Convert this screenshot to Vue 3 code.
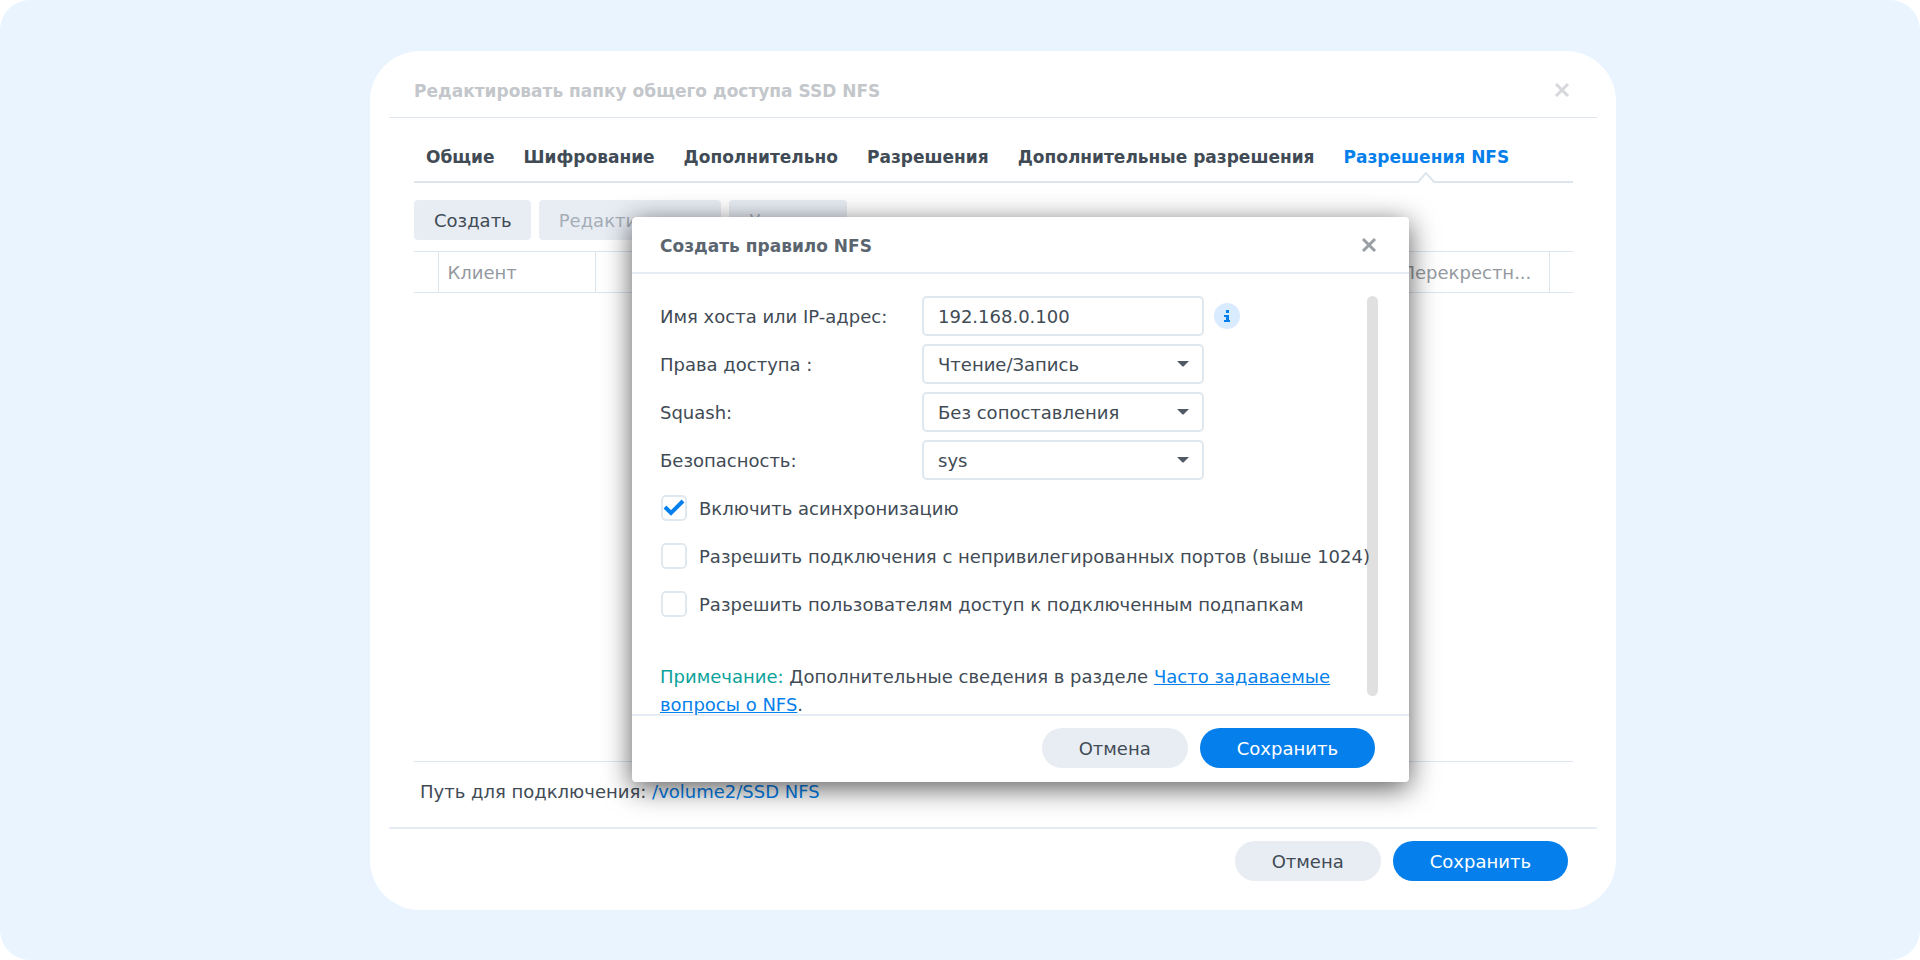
<script setup>
import { ref } from 'vue'

const tabs = [
  'Общие',
  'Шифрование',
  'Дополнительно',
  'Разрешения',
  'Дополнительные разрешения',
  'Разрешения NFS',
]
const activeTab = ref('Разрешения NFS')

const host = ref('192.168.0.100')
const selects = ref([
  { id: 'access', label: 'Права доступа :', value: 'Чтение/Запись' },
  { id: 'squash', label: 'Squash:', value: 'Без сопоставления' },
  { id: 'security', label: 'Безопасность:', value: 'sys' },
])
const options = ref([
  { id: 'async', label: 'Включить асинхронизацию', checked: true },
  { id: 'ports', label: 'Разрешить подключения с непривилегированных портов (выше 1024)', checked: false },
  { id: 'subfolders', label: 'Разрешить пользователям доступ к подключенным подпапкам', checked: false },
])
</script>

<template>
  <div class="page">
    <section class="window">
      <header class="window-head">
        <h1>Редактировать папку общего доступа SSD NFS</h1>
        <button class="close" type="button" aria-label="Закрыть">
          <svg width="16" height="16" viewBox="0 0 16 16"><path d="M2 2L14 14M14 2L2 14" /></svg>
        </button>
      </header>

      <div class="window-body">
        <nav class="tabs">
          <button
            v-for="tab in tabs"
            :key="tab"
            type="button"
            :class="['tab', { active: tab === activeTab }]"
            @click="activeTab = tab"
          >
            {{ tab }}
            <svg v-if="tab === activeTab" class="notch" width="20" height="11" viewBox="0 0 20 11">
              <path class="notch-fill" d="M2 11L10 2L18 11Z" />
              <path class="notch-line" d="M0 10H2L10 1L18 10H20" />
            </svg>
          </button>
        </nav>

        <div class="toolbar">
          <button class="tool" type="button">Создать</button>
          <button class="tool" type="button" disabled>Редактировать</button>
          <button class="tool" type="button" disabled>Удалить</button>
        </div>

        <table class="rules">
          <colgroup>
            <col class="col-edge" />
            <col class="col-client" />
            <col />
            <col class="col-cross" />
            <col class="col-edge" />
          </colgroup>
          <thead>
            <tr>
              <th></th>
              <th>Клиент</th>
              <th></th>
              <th>Перекрестн...</th>
              <th></th>
            </tr>
          </thead>
        </table>

        <p class="path">Путь для подключения: <a href="#">/volume2/SSD NFS</a></p>
      </div>

      <footer class="window-foot">
        <button class="pill" type="button">Отмена</button>
        <button class="pill primary" type="button">Сохранить</button>
      </footer>

      <div class="dialog" role="dialog" aria-labelledby="dialog-title">
        <header class="dialog-head">
          <h2 id="dialog-title">Создать правило NFS</h2>
          <button class="close" type="button" aria-label="Закрыть">
            <svg width="16" height="16" viewBox="0 0 16 16"><path d="M2 2L14 14M14 2L2 14" /></svg>
          </button>
        </header>

        <form class="dialog-body" @submit.prevent>
          <div class="scrollbar"></div>
          <div class="field">
            <label for="host">Имя хоста или IP-адрес:</label>
            <input id="host" v-model="host" class="control" type="text" />
            <svg class="info" width="26" height="26" viewBox="0 0 26 26">
              <circle cx="13" cy="13" r="13" />
              <path d="M12 7h3v3h-3zM10 12h5v5h1v2h-6v-2h2v-3h-2z" />
            </svg>
          </div>
          <div v-for="item in selects" :key="item.id" class="field">
            <label :for="item.id">{{ item.label }}</label>
            <div class="select">
              <select :id="item.id" v-model="item.value" class="control">
                <option>{{ item.value }}</option>
              </select>
              <svg class="arrow" width="14" height="8" viewBox="0 0 14 8">
                <path d="M1 1H13L8 6Q7 7 6 6Z" />
              </svg>
            </div>
          </div>
          <label v-for="item in options" :key="item.id" class="option">
            <span class="box">
              <input v-model="item.checked" type="checkbox" />
              <svg v-if="item.checked" class="tick" width="26" height="26" viewBox="0 0 26 26">
                <path d="M4 12L10 18L22 6" />
              </svg>
            </span>
            <span class="option-text">{{ item.label }}</span>
          </label>
          <p class="note">
            <span>Примечание:</span> Дополнительные сведения в разделе
            <a href="#">Часто задаваемые вопросы о NFS</a>.
          </p>
        </form>

        <footer class="dialog-foot">
          <button class="pill" type="button">Отмена</button>
          <button class="pill primary" type="button">Сохранить</button>
        </footer>
      </div>
    </section>
  </div>
</template>

<style>
body {
  margin: 0;
  background: #fff;
}
</style>

<style scoped>
.page,
.page * {
  box-sizing: border-box;
}

.page {
  display: flex;
  min-height: 100vh;
  padding: 51px 304px 50px 370px;
  border-radius: 30px;
  background: #e9f4ff;
  color: #414b55;
  font-family: "DejaVu Sans", sans-serif;
  font-size: 18px;
  line-height: 28px;
}

button,
input,
select {
  margin: 0;
  color: inherit;
  font: inherit;
}

button {
  padding: 0;
  border: 0;
  background: none;
}

h1,
h2,
p {
  margin: 0;
}

h1,
h2 {
  padding-top: 2px;
  font-size: 17px;
  line-height: 28px;
}

a {
  color: #057feb;
}

.window {
  position: relative;
  display: flex;
  flex: 1;
  flex-direction: column;
  min-width: 0;
  padding: 0 19px;
  border-radius: 50px;
  background: #fff;
}

.window-head {
  display: flex;
  align-items: center;
  justify-content: space-between;
  height: 67px;
  padding: 12px 27px 0 25px;
  border-bottom: 1px solid #dde6ee;
}

.window-head h1 {
  color: #c3c7cb;
}

.close {
  display: flex;
}

.close svg {
  fill: none;
  stroke: #999fa5;
  stroke-width: 3;
}

.window-head .close svg {
  stroke: #d6d8db;
}

.window-body {
  display: flex;
  flex: 1;
  flex-direction: column;
  padding: 0 24px 0 25px;
}

.tabs {
  display: flex;
  gap: 29px;
  height: 65px;
  padding: 15px 12px 0;
  border-bottom: 2px solid #dde6ee;
}

.tab {
  position: relative;
  font-size: 17px;
  font-weight: bold;
  white-space: nowrap;
}

.tab.active {
  color: #057feb;
}

.notch {
  position: absolute;
  bottom: -2px;
  left: 50%;
  margin-left: -10px;
}

.notch-fill {
  fill: #fff;
}

.notch-line {
  fill: none;
  stroke: #dde6ee;
  stroke-width: 2;
}

.toolbar {
  display: flex;
  gap: 8px;
  padding: 17px 0 11px;
}

.tool {
  height: 40px;
  padding: 2px 19px 0 20px;
  border-radius: 4px;
  background: #e8edf4;
}

.tool:disabled {
  color: #a5adb7;
}

.rules {
  width: 100%;
  border-collapse: collapse;
  table-layout: fixed;
}

.rules th {
  height: 41px;
  padding: 2px 0 0 9px;
  border: solid #dde6ee;
  border-width: 1px 1px 1px 0;
  color: #94999f;
  font-weight: normal;
  text-align: left;
  white-space: nowrap;
}

.rules th:last-child {
  border-right: 0;
}

.col-edge {
  width: 24px;
}

.col-client {
  width: 157px;
}

.col-cross {
  width: 157px;
}

.path {
  margin-top: auto;
  height: 66px;
  padding: 16px 0 0 6px;
  border-top: 1px solid #dde6ee;
}

.path a {
  text-decoration: none;
}

.window-foot {
  display: flex;
  justify-content: flex-end;
  gap: 12px;
  height: 83px;
  padding: 12px 29px 0 0;
  border-top: 2px solid #e6ecf3;
}

.pill {
  height: 40px;
  padding: 2px 37px 0;
  border-radius: 20px;
  background: #e8edf4;
}

.pill.primary {
  background: #057feb;
  color: #fff;
}

.dialog {
  position: absolute;
  top: 166px;
  right: 207px;
  left: 262px;
  border-radius: 4px;
  background: #fff;
  box-shadow: 0 6px 28px rgba(0, 0, 0, 0.65);
}

.dialog-head {
  display: flex;
  align-items: center;
  justify-content: space-between;
  height: 57px;
  padding: 0 32px 0 28px;
  border-bottom: 2px solid #e6ecf3;
}

.dialog-head h2 {
  color: #5b656f;
}

.dialog-body {
  position: relative;
  padding: 22px 28px 0;
}

.scrollbar {
  position: absolute;
  top: 22px;
  right: 31px;
  bottom: 18px;
  width: 11px;
  border-radius: 6px;
  background: #e0e0e0;
}

.field {
  display: grid;
  grid-template-columns: 262px 282px 36px;
  align-items: center;
  margin-bottom: 8px;
}

.field label,
.option-text {
  padding-top: 2px;
}

.info {
  margin-left: 10px;
}

.info circle {
  fill: #d9ebff;
}

.info path {
  fill: #057feb;
}

.control {
  width: 100%;
  height: 40px;
  padding: 0 14px;
  border: 2px solid #dfe7ef;
  border-radius: 5px;
  background: #fff;
  outline: 0;
  appearance: none;
}

select.control {
  padding-top: 2px;
}

.select {
  position: relative;
}

.arrow {
  position: absolute;
  top: 16px;
  right: 14px;
  fill: #505a64;
  pointer-events: none;
}

.option {
  position: relative;
  display: flex;
  align-items: center;
  gap: 12px;
  height: 40px;
  margin-bottom: 8px;
  padding-left: 1px;
  white-space: nowrap;
}

.box {
  position: relative;
  display: flex;
}

.box input {
  width: 26px;
  height: 26px;
  border: 2px solid #e0e8f0;
  border-radius: 5px;
  background: #fff;
  appearance: none;
}

.tick {
  position: absolute;
  top: 0;
  left: 0;
  fill: none;
  stroke: #057feb;
  stroke-width: 4;
  pointer-events: none;
}

.note {
  height: 82px;
  padding: 31px 20px 0 0;
}

.note span {
  color: #0ba29b;
}

.dialog-foot {
  display: flex;
  justify-content: flex-end;
  gap: 12px;
  padding: 12px 34px 14px;
  border-top: 2px solid #e6ecf3;
}
</style>
